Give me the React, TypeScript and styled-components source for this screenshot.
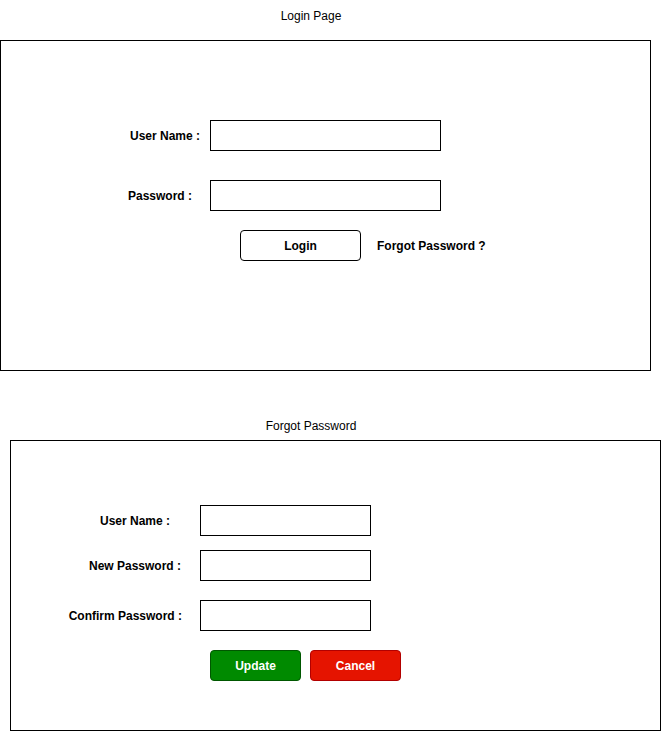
import React from "react";
import styled, { createGlobalStyle } from "styled-components";

const GlobalStyle = createGlobalStyle`
  html, body {
    margin: 0;
    padding: 0;
    background: #ffffff;
  }
  body {
    font-family: "Liberation Sans", Arial, Helvetica, sans-serif;
    font-size: 12px;
    color: #000000;
  }
`;

const Page = styled.div`
  display: flex;
  flex-direction: column;
  width: 661px;
`;

const Caption = styled.div<{ $top: number; $height: number; $line: number }>`
  width: 622px;
  margin-top: ${(p) => p.$top}px;
  height: ${(p) => p.$height}px;
  line-height: ${(p) => p.$line}px;
  text-align: center;
  font-size: 12px;
`;

const Panel = styled.div<{ $left: number; $height: number; $padTop: number }>`
  box-sizing: border-box;
  width: 651px;
  height: ${(p) => p.$height}px;
  margin-left: ${(p) => p.$left}px;
  border: 1px solid #000000;
  padding-top: ${(p) => p.$padTop}px;
  display: flex;
  flex-direction: column;
`;

const Row = styled.div<{ $gap: number }>`
  display: flex;
  align-items: center;
  height: 31px;
  margin-top: ${(p) => p.$gap}px;
`;

const Label = styled.label<{ $width: number; $pad: number }>`
  box-sizing: border-box;
  width: ${(p) => p.$width}px;
  padding-right: ${(p) => p.$pad}px;
  text-align: right;
  font-weight: bold;
  font-size: 12px;
  white-space: nowrap;
`;

const Field = styled.input<{ $width: number }>`
  box-sizing: border-box;
  width: ${(p) => p.$width}px;
  height: 31px;
  border: 1px solid #000000;
  border-radius: 0;
  margin: 0;
  padding: 0 6px;
  background: #ffffff;
  font: inherit;
  outline: none;
`;

const Actions = styled.div<{ $gap: number; $indent: number }>`
  display: flex;
  align-items: center;
  height: 31px;
  margin-top: ${(p) => p.$gap}px;
  padding-left: ${(p) => p.$indent}px;
`;

const Button = styled.button<{ $width: number; $fill: string; $stroke: string; $ink: string }>`
  box-sizing: border-box;
  width: ${(p) => p.$width}px;
  height: 31px;
  margin: 0;
  padding: 0;
  border: 1px solid ${(p) => p.$stroke};
  border-radius: 4px;
  background: ${(p) => p.$fill};
  color: ${(p) => p.$ink};
  font-family: "Liberation Sans", Arial, Helvetica, sans-serif;
  font-size: 12px;
  font-weight: bold;
  cursor: pointer;

  & + & {
    margin-left: 9px;
  }
`;

const LinkText = styled.span`
  margin-left: 16px;
  font-weight: bold;
  font-size: 12px;
  cursor: pointer;
`;

export default function App() {
  return (
    <>
      <GlobalStyle />
      <Page>
        <Caption $top={0} $height={40} $line={32}>Login Page</Caption>
        <Panel $left={0} $height={331} $padTop={79}>
          <Row $gap={0}>
            <Label $width={209} $pad={10}>User Name :</Label>
            <Field $width={231} />
          </Row>
          <Row $gap={29}>
            <Label $width={209} $pad={18}>Password :</Label>
            <Field $width={231} type="password" />
          </Row>
          <Actions $gap={19} $indent={239}>
            <Button $width={121} $fill="#ffffff" $stroke="#000000" $ink="#000000">
              Login
            </Button>
            <LinkText>Forgot Password ?</LinkText>
          </Actions>
        </Panel>

        <Caption $top={40} $height={29} $line={30}>Forgot Password</Caption>
        <Panel $left={10} $height={291} $padTop={64}>
          <Row $gap={0}>
            <Label $width={189} $pad={30}>User Name :</Label>
            <Field $width={171} />
          </Row>
          <Row $gap={14}>
            <Label $width={189} $pad={19}>New Password :</Label>
            <Field $width={171} type="password" />
          </Row>
          <Row $gap={19}>
            <Label $width={189} $pad={18}>Confirm Password :</Label>
            <Field $width={171} type="password" />
          </Row>
          <Actions $gap={19} $indent={199}>
            <Button $width={91} $fill="#008a00" $stroke="#005700" $ink="#ffffff">
              Update
            </Button>
            <Button $width={91} $fill="#e51400" $stroke="#b20000" $ink="#ffffff">
              Cancel
            </Button>
          </Actions>
        </Panel>
      </Page>
    </>
  );
}
